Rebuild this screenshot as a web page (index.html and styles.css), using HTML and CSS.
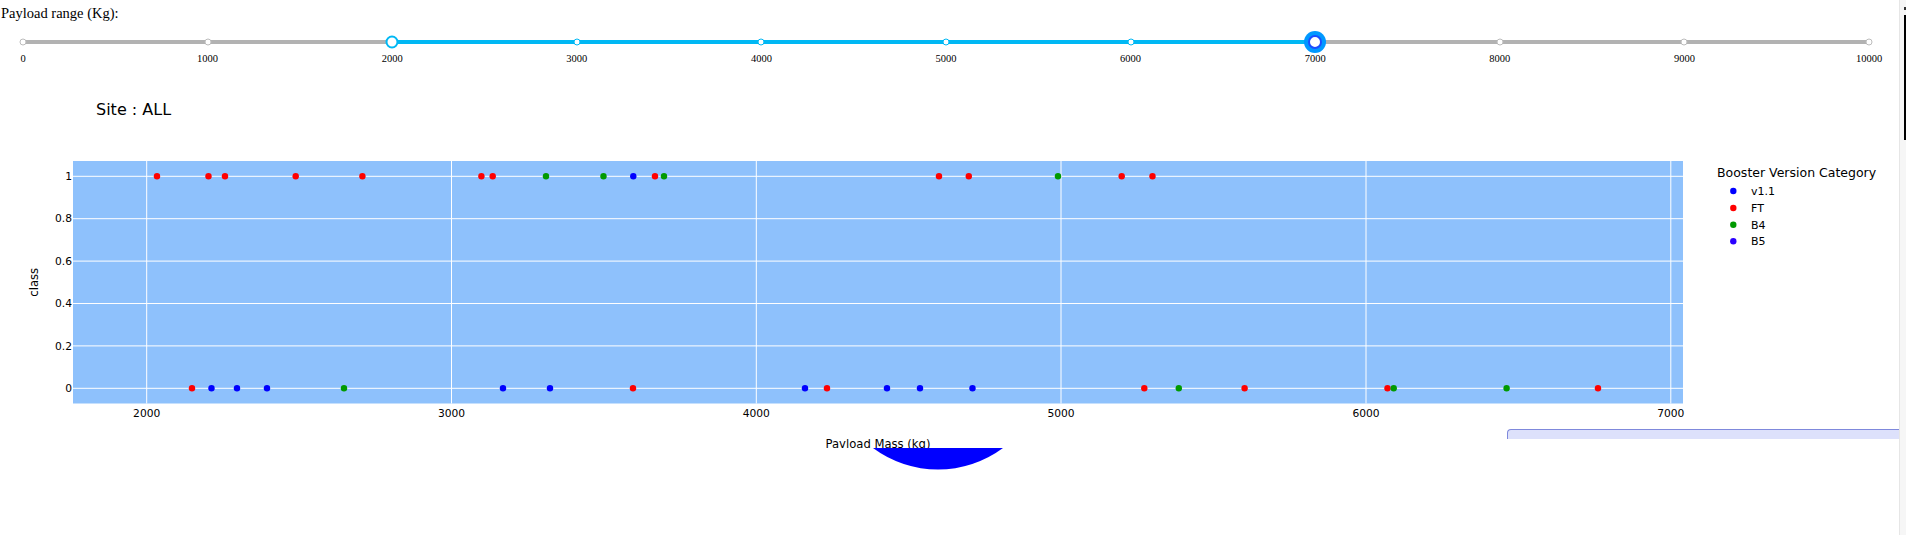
FILE: index.html
```html
<!DOCTYPE html>
<html lang="en">
<head>
    <meta charset="UTF-8">
    <meta name="viewport" content="width=device-width, initial-scale=1.0">
    <title>SpaceX Launch Records Dashboard</title>
    <link rel="stylesheet" href="styles.css">
</head>
<body>
    <div class="page">
        <div class="main">
            <p class="range-label">Payload range (Kg):</p>

            <div class="slider">
                <div class="rail"></div>
                <div class="track" style="left:20%;width:50%"></div>
                <div class="steps">
                    <span class="dot" style="left:0%"></span>
                    <span class="dot" style="left:10%"></span>
                    <span class="dot active" style="left:20%"></span>
                    <span class="dot active" style="left:30%"></span>
                    <span class="dot active" style="left:40%"></span>
                    <span class="dot active" style="left:50%"></span>
                    <span class="dot active" style="left:60%"></span>
                    <span class="dot active" style="left:70%"></span>
                    <span class="dot" style="left:80%"></span>
                    <span class="dot" style="left:90%"></span>
                    <span class="dot" style="left:100%"></span>
                </div>
                <div class="handle" style="left:20%"></div>
                <div class="handle focused" style="left:70%"></div>
                <div class="marks">
                    <span class="mark" style="left:0%">0</span>
                    <span class="mark" style="left:10%">1000</span>
                    <span class="mark" style="left:20%">2000</span>
                    <span class="mark" style="left:30%">3000</span>
                    <span class="mark" style="left:40%">4000</span>
                    <span class="mark" style="left:50%">5000</span>
                    <span class="mark" style="left:60%">6000</span>
                    <span class="mark" style="left:70%">7000</span>
                    <span class="mark" style="left:80%">8000</span>
                    <span class="mark" style="left:90%">9000</span>
                    <span class="mark" style="left:100%">10000</span>
                </div>
            </div>

            <!-- success-payload-scatter-chart -->
            <svg class="chart" width="1899" height="384" viewBox="0 64 1899 384">
                <text class="chart-title" x="96" y="115">Site : ALL</text>

                <rect class="plot-bg" x="73" y="161" width="1610" height="242.5"></rect>
                <g class="grid">
                    <line x1="146.7" y1="161" x2="146.7" y2="403.5"></line>
                    <line x1="451.5" y1="161" x2="451.5" y2="403.5"></line>
                    <line x1="756.3" y1="161" x2="756.3" y2="403.5"></line>
                    <line x1="1061" y1="161" x2="1061" y2="403.5"></line>
                    <line x1="1366" y1="161" x2="1366" y2="403.5"></line>
                    <line x1="1670.8" y1="161" x2="1670.8" y2="403.5"></line>
                    <line x1="73" y1="176.3" x2="1683" y2="176.3"></line>
                    <line x1="73" y1="218.7" x2="1683" y2="218.7"></line>
                    <line x1="73" y1="261.1" x2="1683" y2="261.1"></line>
                    <line x1="73" y1="303.5" x2="1683" y2="303.5"></line>
                    <line x1="73" y1="345.9" x2="1683" y2="345.9"></line>
                    <line x1="73" y1="388.3" x2="1683" y2="388.3"></line>
                </g>

                <g class="ytick">
                    <text x="72" y="180">1</text>
                    <text x="72" y="222.4">0.8</text>
                    <text x="72" y="264.8">0.6</text>
                    <text x="72" y="307.2">0.4</text>
                    <text x="72" y="349.6">0.2</text>
                    <text x="72" y="392">0</text>
                </g>
                <g class="xtick">
                    <text x="146.7" y="416.7">2000</text>
                    <text x="451.5" y="416.7">3000</text>
                    <text x="756.3" y="416.7">4000</text>
                    <text x="1061" y="416.7">5000</text>
                    <text x="1366" y="416.7">6000</text>
                    <text x="1670.8" y="416.7">7000</text>
                </g>
                <text class="axis-title" transform="translate(37.7,282.3) rotate(-90)">class</text>
                <text class="axis-title" x="878" y="447.6">Payload Mass (kg)</text>

                <!-- v1.1 -->
                <g class="pt v11">
                    <circle cx="633.3" cy="176.3" r="3.2"></circle>
                    <circle cx="211.5" cy="388.3" r="3.2"></circle>
                    <circle cx="237" cy="388.3" r="3.2"></circle>
                    <circle cx="267" cy="388.3" r="3.2"></circle>
                    <circle cx="503" cy="388.3" r="3.2"></circle>
                    <circle cx="550" cy="388.3" r="3.2"></circle>
                    <circle cx="805" cy="388.3" r="3.2"></circle>
                    <circle cx="887" cy="388.3" r="3.2"></circle>
                    <circle cx="920" cy="388.3" r="3.2"></circle>
                    <circle cx="972.5" cy="388.3" r="3.2"></circle>
                </g>
                <!-- FT -->
                <g class="pt ft">
                    <circle cx="157" cy="176.3" r="3.2"></circle>
                    <circle cx="208.5" cy="176.3" r="3.2"></circle>
                    <circle cx="225" cy="176.3" r="3.2"></circle>
                    <circle cx="295.7" cy="176.3" r="3.2"></circle>
                    <circle cx="362.4" cy="176.3" r="3.2"></circle>
                    <circle cx="481.4" cy="176.3" r="3.2"></circle>
                    <circle cx="492.7" cy="176.3" r="3.2"></circle>
                    <circle cx="655" cy="176.3" r="3.2"></circle>
                    <circle cx="939" cy="176.3" r="3.2"></circle>
                    <circle cx="968.8" cy="176.3" r="3.2"></circle>
                    <circle cx="1121.7" cy="176.3" r="3.2"></circle>
                    <circle cx="1152.5" cy="176.3" r="3.2"></circle>
                    <circle cx="192" cy="388.3" r="3.2"></circle>
                    <circle cx="633" cy="388.3" r="3.2"></circle>
                    <circle cx="827" cy="388.3" r="3.2"></circle>
                    <circle cx="1144.3" cy="388.3" r="3.2"></circle>
                    <circle cx="1244.6" cy="388.3" r="3.2"></circle>
                    <circle cx="1387.5" cy="388.3" r="3.2"></circle>
                    <circle cx="1598" cy="388.3" r="3.2"></circle>
                </g>
                <!-- B4 -->
                <g class="pt b4">
                    <circle cx="546" cy="176.3" r="3.2"></circle>
                    <circle cx="603.5" cy="176.3" r="3.2"></circle>
                    <circle cx="664" cy="176.3" r="3.2"></circle>
                    <circle cx="1058" cy="176.3" r="3.2"></circle>
                    <circle cx="344" cy="388.3" r="3.2"></circle>
                    <circle cx="1178.8" cy="388.3" r="3.2"></circle>
                    <circle cx="1393.7" cy="388.3" r="3.2"></circle>
                    <circle cx="1506.6" cy="388.3" r="3.2"></circle>
                </g>

                <g class="legend">
                    <text class="legend-title" x="1717" y="177">Booster Version Category</text>
                    <circle class="v11" cx="1733.3" cy="191" r="3.2"></circle>
                    <text x="1751" y="195">v1.1</text>
                    <circle class="ft" cx="1733.3" cy="208" r="3.2"></circle>
                    <text x="1751" y="212">FT</text>
                    <circle class="b4" cx="1733.3" cy="224.7" r="3.2"></circle>
                    <text x="1751" y="228.7">B4</text>
                    <circle class="b5" cx="1733.3" cy="241.3" r="3.2"></circle>
                    <text x="1751" y="245.3">B5</text>
                </g>
            </svg>

            <div class="lower">
                <svg class="pie" width="130" height="22" viewBox="0 0 130 22">
                    <path d="M0,0 A109,109 0 0 0 130,0 Z"></path>
                </svg>
                <div class="dropdown"></div>
            </div>
        </div>

        <div class="scrollbar">
            <span class="scroll-arrow"></span>
            <span class="scroll-thumb"></span>
        </div>
    </div>
</body>
</html>
```

FILE: styles.css
```css
html, body {
    margin: 0;
    padding: 0;
    background-color: #ffffff;
    overflow: hidden;
}

.page {
    display: flex;
    height: 535px;
}

.main {
    flex: 1;
    min-width: 0;
}

.range-label {
    margin: 0;
    padding: 4px 0 0 1px;
    height: 18px;
    font-family: "Liberation Serif", "Times New Roman", serif;
    font-size: 14.5px;
    line-height: 18px;
    color: #000;
}

/* range slider */
.slider {
    position: relative;
    height: 42px;
    margin: 0 30px 0 23px;
}

.rail {
    position: absolute;
    top: 18px;
    left: 0;
    right: 0;
    height: 4px;
    border-radius: 2px;
    background-color: #b2b2b2;
}

.track {
    position: absolute;
    top: 18px;
    height: 4px;
    background-color: #00b8f4;
}

.dot {
    position: absolute;
    top: 20px;
    width: 7px;
    height: 7px;
    box-sizing: border-box;
    border: 1.5px solid #bcbcbc;
    border-radius: 50%;
    background-color: #fff;
    transform: translate(-50%, -50%);
}

.dot.active {
    border-color: #00b8f4;
}

.handle {
    position: absolute;
    top: 20px;
    width: 13px;
    height: 13px;
    box-sizing: border-box;
    border: 2px solid #00b8f4;
    border-radius: 50%;
    background-color: #fff;
    transform: translate(-50%, -50%);
}

.handle.focused {
    width: 14px;
    height: 14px;
    border-color: #1b4dff;
    box-shadow: 0 0 0 4px #0098ff;
}

.mark {
    position: absolute;
    top: 31px;
    font-family: "Liberation Serif", "Times New Roman", serif;
    font-size: 10.5px;
    line-height: 12px;
    color: #000;
    transform: translateX(-50%);
}

/* scatter chart */
.chart {
    display: block;
    overflow: hidden;
    font-family: "DejaVu Sans", Verdana, sans-serif;
}

.chart text {
    fill: #000;
}

.chart-title {
    font-size: 16px;
}

.plot-bg {
    fill: #8ec1fc;
}

.grid line {
    stroke: #ffffff;
    stroke-width: 1;
}

.ytick text {
    font-size: 10.7px;
    text-anchor: end;
}

.xtick text {
    font-size: 10.7px;
    text-anchor: middle;
}

.axis-title {
    font-size: 11.6px;
    text-anchor: middle;
}

.v11 { fill: #0000ff; }
.ft { fill: #ff0000; }
.b4 { fill: #009a00; }
.b5 { fill: #2a00ff; }

.legend text {
    font-size: 11px;
}

.legend .legend-title {
    font-size: 12.5px;
}

/* pie chart and dropdown peeking out below */
.lower {
    display: flex;
    align-items: flex-start;
    margin-top: -19px;
}

.pie {
    display: block;
    margin: 19px 0 0 873px;
}

.pie path {
    fill: #0000ff;
}

.dropdown {
    flex: 1;
    height: 9px;
    margin-left: 504px;
    border-top: 1px solid #7f89dc;
    border-left: 1px solid #7f89dc;
    border-top-left-radius: 4px;
    background-color: #dde1fb;
}

/* browser scrollbar */
.scrollbar {
    width: 7px;
    border-left: 1px solid #e6e6e6;
    background-color: #f6f6f6;
    box-sizing: border-box;
}

.scroll-arrow {
    display: block;
    width: 2px;
    height: 3px;
    margin: 7px 0 0 4px;
    background-color: #333;
}

.scroll-thumb {
    display: block;
    width: 2px;
    height: 125px;
    margin: 5px 0 0 4px;
    background-color: #000;
}
```
